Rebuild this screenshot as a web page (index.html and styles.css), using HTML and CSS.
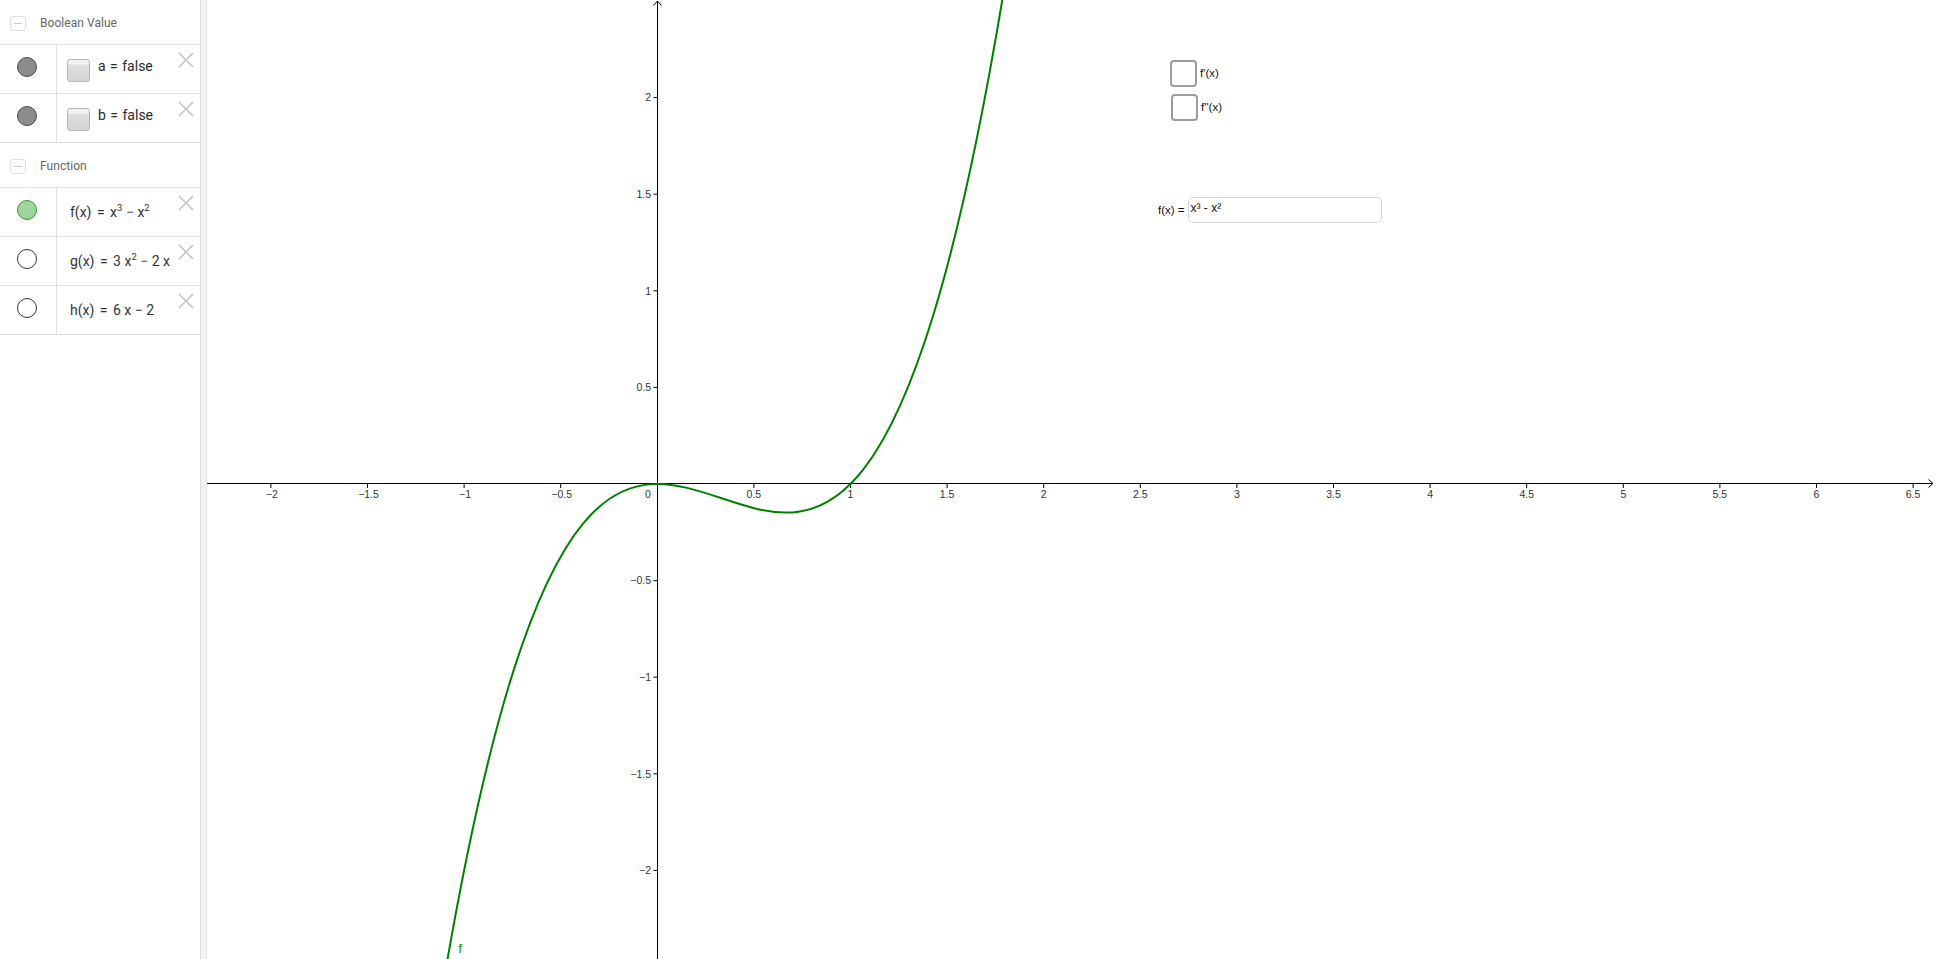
FILE: index.html
```html
<!DOCTYPE html>
<html lang="en">
<head>
<meta charset="utf-8">
<title>GeoGebra</title>
<link rel="stylesheet" href="styles.css">
</head>
<body>
<div class="app">
  <aside class="algebra">
    <div class="group-head">
      <span class="toggle"><span class="toggle-bar"></span></span>
      <span class="group-title">Boolean Value</span>
    </div>
    <div class="item">
      <div class="marble-col"><span class="marble marble-gray"></span></div>
      <div class="item-body item-body-bool"><span class="bool-box"></span><span class="expr">a = false</span></div>
      <svg class="del" width="16" height="16" viewBox="0 0 16 16"><path d="M1 1L15 15M15 1L1 15"/></svg>
    </div>
    <div class="item">
      <div class="marble-col"><span class="marble marble-gray"></span></div>
      <div class="item-body item-body-bool"><span class="bool-box"></span><span class="expr">b = false</span></div>
      <svg class="del" width="16" height="16" viewBox="0 0 16 16"><path d="M1 1L15 15M15 1L1 15"/></svg>
    </div>
    <div class="group-head">
      <span class="toggle"><span class="toggle-bar"></span></span>
      <span class="group-title">Function</span>
    </div>
    <div class="item">
      <div class="marble-col"><span class="marble marble-green"></span></div>
      <div class="item-body item-body-fn"><span class="expr">f(x) <span class="eq">=</span> x<sup>3</sup> <span class="op">−</span> x<sup>2</sup></span></div>
      <svg class="del" width="16" height="16" viewBox="0 0 16 16"><path d="M1 1L15 15M15 1L1 15"/></svg>
    </div>
    <div class="item">
      <div class="marble-col"><span class="marble marble-empty"></span></div>
      <div class="item-body item-body-fn"><span class="expr">g(x) <span class="eq">=</span> 3 x<sup>2</sup> <span class="op">−</span> 2 x</span></div>
      <svg class="del" width="16" height="16" viewBox="0 0 16 16"><path d="M1 1L15 15M15 1L1 15"/></svg>
    </div>
    <div class="item">
      <div class="marble-col"><span class="marble marble-empty"></span></div>
      <div class="item-body item-body-fn"><span class="expr">h(x) <span class="eq">=</span> 6 x − 2</span></div>
      <svg class="del" width="16" height="16" viewBox="0 0 16 16"><path d="M1 1L15 15M15 1L1 15"/></svg>
    </div>
  </aside>
  <div class="splitter"></div>
  <main class="graphics">
    <svg class="plot" width="1728" height="959" viewBox="0 0 1728 959">
      <g class="axes">
        <line x1="0" y1="483.5" x2="1726" y2="483.5"/>
        <polyline class="arrow" points="1721.5,479.5 1726,483.5 1721.5,487.5"/>
        <line x1="450.5" y1="1" x2="450.5" y2="959"/>
        <polyline class="arrow" points="446.5,5.5 450.5,1 454.5,5.5"/>
      </g>
      <g class="ticks">
        <line x1="63.9" y1="484" x2="63.9" y2="488"/>
        <line x1="160.5" y1="484" x2="160.5" y2="488"/>
        <line x1="257.1" y1="484" x2="257.1" y2="488"/>
        <line x1="353.7" y1="484" x2="353.7" y2="488"/>
        <line x1="546.9" y1="484" x2="546.9" y2="488"/>
        <line x1="643.5" y1="484" x2="643.5" y2="488"/>
        <line x1="740.1" y1="484" x2="740.1" y2="488"/>
        <line x1="836.7" y1="484" x2="836.7" y2="488"/>
        <line x1="933.3" y1="484" x2="933.3" y2="488"/>
        <line x1="1029.9" y1="484" x2="1029.9" y2="488"/>
        <line x1="1126.5" y1="484" x2="1126.5" y2="488"/>
        <line x1="1223.1" y1="484" x2="1223.1" y2="488"/>
        <line x1="1319.7" y1="484" x2="1319.7" y2="488"/>
        <line x1="1416.3" y1="484" x2="1416.3" y2="488"/>
        <line x1="1512.9" y1="484" x2="1512.9" y2="488"/>
        <line x1="1609.5" y1="484" x2="1609.5" y2="488"/>
        <line x1="1706.1" y1="484" x2="1706.1" y2="488"/>
        <line x1="446.5" y1="97.6" x2="450" y2="97.6"/>
        <line x1="446.5" y1="194.2" x2="450" y2="194.2"/>
        <line x1="446.5" y1="290.8" x2="450" y2="290.8"/>
        <line x1="446.5" y1="387.4" x2="450" y2="387.4"/>
        <line x1="446.5" y1="580.6" x2="450" y2="580.6"/>
        <line x1="446.5" y1="677.2" x2="450" y2="677.2"/>
        <line x1="446.5" y1="773.8" x2="450" y2="773.8"/>
        <line x1="446.5" y1="870.4" x2="450" y2="870.4"/>
      </g>
      <g class="xlabels">
        <text x="64.9" y="497.5">−2</text>
        <text x="161.5" y="497.5">−1.5</text>
        <text x="258.1" y="497.5">−1</text>
        <text x="354.7" y="497.5">−0.5</text>
        <text x="441" y="497.5">0</text>
        <text x="546.9" y="497.5">0.5</text>
        <text x="643.5" y="497.5">1</text>
        <text x="740.1" y="497.5">1.5</text>
        <text x="836.7" y="497.5">2</text>
        <text x="933.3" y="497.5">2.5</text>
        <text x="1029.9" y="497.5">3</text>
        <text x="1126.5" y="497.5">3.5</text>
        <text x="1223.1" y="497.5">4</text>
        <text x="1319.7" y="497.5">4.5</text>
        <text x="1416.3" y="497.5">5</text>
        <text x="1512.9" y="497.5">5.5</text>
        <text x="1609.5" y="497.5">6</text>
        <text x="1706.1" y="497.5">6.5</text>
      </g>
      <g class="ylabels">
        <text x="444" y="101.3">2</text>
        <text x="444" y="197.9">1.5</text>
        <text x="444" y="294.5">1</text>
        <text x="444" y="391.1">0.5</text>
        <text x="444" y="584.3">−0.5</text>
        <text x="444" y="680.9">−1</text>
        <text x="444" y="777.5">−1.5</text>
        <text x="444" y="874.1">−2</text>
      </g>
      <path class="curve" d="M237.78 974.92 C424.54 -113.89 611.30 1126.20 798.06 -16.77"/>
      <text class="curve-label" x="251.5" y="952.5">f</text>
    </svg>

    <label class="gcheck gcheck-1"><span class="gbox"></span><span class="glabel">f'(x)</span></label>
    <label class="gcheck gcheck-2"><span class="gbox"></span><span class="glabel">f''(x)</span></label>

    <div class="ginput">
      <span class="ginput-label">f(x) =</span>
      <span class="ginput-field">x³ - x²</span>
    </div>
  </main>
</div>
</body>
</html>
```

FILE: styles.css
```css
* { box-sizing: border-box; }
html, body { margin: 0; padding: 0; background: #fff; }
body { width: 1936px; height: 959px; overflow: hidden; font-family: Roboto, "Noto Sans", sans-serif; }

.app { display: flex; width: 1936px; height: 959px; }

/* ---------- Algebra view ---------- */
.algebra {
  width: 201px;
  flex: 0 0 201px;
  height: 959px;
  border-right: 1px solid #dcdcdc;
  background: #fff;
}
.group-head {
  height: 45px;
  border-bottom: 1px solid #e0e0e0;
  display: flex;
  align-items: center;
  padding-left: 10px;
  padding-top: 2px;
  gap: 14px;
}
.toggle {
  width: 16px; height: 15px;
  border: 1px solid #dedede;
  border-radius: 3px;
  display: flex; align-items: center; justify-content: center;
}
.toggle-bar { width: 8px; height: 1px; background: #c8c8c8; }
.group-title { font-size: 12px; color: #666; letter-spacing: 0.05px; }

.item {
  position: relative;
  height: 49px;
  border-bottom: 1px solid #e0e0e0;
  display: flex;
}
.marble-col {
  width: 57px; flex: 0 0 57px;
  border-right: 1px solid #e0e0e0;
  display: flex; align-items: center; justify-content: center;
  padding-right: 2px;
  padding-bottom: 4px;
}
.marble {
  width: 20px; height: 20px; border-radius: 50%;
  display: block;
}
.marble-gray { background: #8c8c8c; border: 1px solid #4a4a4a; }
.marble-green { background: #9fd49f; border: 1px solid #2f9a2f; }
.marble-empty { background: #fff; border: 1px solid #333; }

.item-body { display: flex; align-items: center; flex: 1; }
.item-body-bool { padding-left: 10px; gap: 8px; }
.item-body-fn { padding-left: 13px; }
.bool-box {
  width: 23px; height: 23px;
  border: 1px solid #b4b4b4;
  border-radius: 3px;
  background: linear-gradient(#f2f2f2 0, #f2f2f2 4px, #dedede 5px, #d6d6d6 100%);
  margin-top: 2px;
}
.item-body-bool .expr { font-size: 14px; color: #2a2a2a; margin-top: -6px; word-spacing: 1px; }
.item-body-fn .expr { font-size: 14px; color: #333; margin-top: 0; white-space: nowrap; }
.eq { margin: 0 2px; }
.op { color: #555; }
.expr sup { font-size: 9.5px; line-height: 0; vertical-align: 6px; }

.del {
  position: absolute;
  right: 6px; top: 7px;
  fill: none; stroke: #c4c4c4; stroke-width: 1.6;
}

.splitter {
  width: 6px; flex: 0 0 6px;
  background: #f4f4f4;
  border-right: 1px solid #e6e6e6;
}

/* ---------- Graphics view ---------- */
.graphics { position: relative; flex: 1; height: 959px; overflow: hidden; background: #fff; }
.plot { display: block; }
.axes line, .ticks line { stroke: #000; stroke-width: 1; }
.axes .arrow { fill: none; stroke: #000; stroke-width: 1; }
.xlabels text, .ylabels text {
  font-family: "Liberation Sans", Arial, sans-serif;
  font-size: 10.5px;
  fill: #333;
}
.xlabels text { text-anchor: middle; }
.ylabels text { text-anchor: end; }
.curve { fill: none; stroke: #008000; stroke-width: 2; }
.curve-label { font-family: "Liberation Sans", Arial, sans-serif; font-size: 12px; fill: #008000; }

.gcheck {
  position: absolute;
  display: flex; align-items: center; gap: 3px;
  font-family: "Liberation Sans", Arial, sans-serif;
  font-size: 11.5px; color: #111;
}
.gcheck-1 { left: 963px; top: 60px; }
.gcheck-2 { left: 964px; top: 94px; }
.gbox {
  width: 27px; height: 27px;
  border: 2px solid #9c9c9c;
  border-radius: 4px;
  background: #fff;
}
.glabel { margin-top: -1px; }

.ginput {
  position: absolute;
  left: 951px; top: 197px;
  display: flex; align-items: center; gap: 3px;
  font-family: "Liberation Sans", Arial, sans-serif;
  font-size: 11.5px; color: #111;
}
.ginput-field {
  width: 194px; height: 26px;
  border: 1px solid #d4d4d4;
  border-radius: 5px;
  padding: 0 2px;
  display: flex; align-items: flex-start;
  line-height: 20px;
  font-size: 12px;
}
```
